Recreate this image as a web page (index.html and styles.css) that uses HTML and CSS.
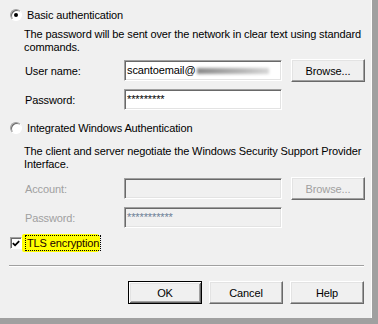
FILE: index.html
```html
<!DOCTYPE html>
<html lang="en">
<head>
    <meta charset="UTF-8">
    <title>Authentication</title>
    <link rel="stylesheet" href="styles.css">
</head>
<body>
    <div class="dialog">
        <div class="option first-option">
            <span class="radio checked"></span>
            <span class="option-text">Basic authentication</span>
        </div>
        <p class="desc">The password will be sent over the network in clear text using standard<br>commands.</p>
        <div class="fields basic-fields">
            <span class="label">User name:</span>
            <div class="textbox"><span>scantoemail@</span><span class="smudge"></span></div>
            <div class="btn">Browse...</div>
            <span class="label">Password:</span>
            <div class="textbox pw">*********</div>
        </div>

        <div class="option second-option">
            <span class="radio"></span>
            <span class="option-text">Integrated Windows Authentication</span>
        </div>
        <p class="desc">The client and server negotiate the Windows Security Support Provider<br>Interface.</p>
        <div class="fields disabled">
            <span class="label">Account:</span>
            <div class="textbox"></div>
            <div class="btn">Browse...</div>
            <span class="label">Password:</span>
            <div class="textbox pw">***********</div>
        </div>

        <div class="tls">
            <span class="checkbox">
                <svg width="11" height="11" viewBox="0 0 11 11"><polyline points="2,5 4.5,7.5 9,3" fill="none" stroke="#000" stroke-width="2"/></svg>
            </span>
            <span class="highlight"><span class="focus">TLS encryption</span></span>
        </div>

        <div class="separator"></div>

        <div class="buttons">
            <div class="btn default">OK</div>
            <div class="btn">Cancel</div>
            <div class="btn">Help</div>
        </div>
    </div>
</body>
</html>
```

FILE: styles.css
```css
body {
    margin: 0;
    background-color: #a0a0a0;
    font-family: "Liberation Sans", Arial, sans-serif;
    font-size: 11px;
    letter-spacing: -0.12px;
    color: #000;
}
.dialog {
    width: 372px;
    height: 318px;
    box-sizing: border-box;
    background-color: #f0f0f0;
    border-right: 1px solid #fcfcfc;
    padding-top: 8px;
}
.option {
    display: flex;
    align-items: center;
    height: 14px;
    padding-left: 10px;
}
.second-option {
    margin-top: 11px;
}
.option-text {
    margin-left: 5px;
}
.radio {
    position: relative;
    width: 12px;
    height: 12px;
    box-sizing: border-box;
    border-radius: 50%;
    background-color: #fff;
    border: 1px solid;
    border-color: #a0a0a0 #fff #fff #a0a0a0;
    box-shadow: inset 1px 1px #696969;
}
.radio.checked::after {
    content: "";
    position: absolute;
    left: 3px;
    top: 3px;
    width: 4px;
    height: 4px;
    border-radius: 50%;
    background-color: #000;
}
.desc {
    margin: 6px 0 0 24px;
    line-height: 13px;
    white-space: nowrap;
}
.second-option + .desc {
    margin-top: 10px;
}
.fields {
    display: grid;
    grid-template-columns: 90px 158px 74px;
    grid-template-rows: 23px 21px;
    column-gap: 9px;
    row-gap: 7px;
    align-items: center;
    margin-top: 5px;
    padding-left: 25px;
}
.disabled {
    margin-top: 6px;
}
.textbox {
    height: 21px;
    box-sizing: border-box;
    background-color: #fff;
    border: 1px solid;
    border-color: #a0a0a0 #fff #fff #a0a0a0;
    box-shadow: inset 1px 1px #696969, inset -1px -1px #e3e3e3;
    padding: 0 0 0 2px;
    line-height: 19px;
    display: flex;
    align-items: center;
    white-space: nowrap;
    overflow: hidden;
}
.smudge {
    display: inline-block;
    width: 72px;
    height: 6px;
    margin-left: 2px;
    background: linear-gradient(to right, #8a8a8a, #b4b4b4 60%, #d6d6d6);
    filter: blur(1.5px);
}
.btn {
    height: 23px;
    box-sizing: border-box;
    background-color: #f0f0f0;
    border: 1px solid;
    border-color: #fff #696969 #696969 #fff;
    box-shadow: inset -1px -1px #a0a0a0, inset 1px 1px #e3e3e3;
    display: flex;
    align-items: center;
    justify-content: center;
}
.disabled .label,
.disabled .btn {
    color: #a0a0a0;
}
.disabled .textbox {
    background-color: #f0f0f0;
}
.disabled .pw {
    color: #6d7f96;
}
.tls {
    display: flex;
    align-items: center;
    height: 18px;
    margin-top: 6px;
    padding-left: 10px;
}
.checkbox {
    width: 12px;
    height: 12px;
    box-sizing: border-box;
    background-color: #fff;
    border: 1px solid;
    border-color: #a0a0a0 #fff #fff #a0a0a0;
    box-shadow: inset 1px 1px #696969;
    display: flex;
    align-items: center;
    justify-content: center;
}
.highlight {
    background-color: #ffff00;
    height: 18px;
    display: flex;
    align-items: center;
    padding-left: 4px;
    border-radius: 2px 4px 4px 2px;
}
.focus {
    outline: 1px dotted #000;
    line-height: 14px;
    padding: 0 1px;
    color: #1a0000;
}
.separator {
    margin: 13px 7px 0 9px;
    border-top: 1px solid #a0a0a0;
    border-bottom: 1px solid #fff;
}
.buttons {
    display: flex;
    justify-content: flex-end;
    gap: 7px;
    margin-top: 14px;
    padding-right: 7px;
}
.buttons .btn {
    width: 74px;
}
.btn.default {
    border-color: #000;
    box-shadow: inset 1px 1px #fff, inset -1px -1px #696969, inset 2px 2px #e3e3e3, inset -2px -2px #a0a0a0;
}
```
